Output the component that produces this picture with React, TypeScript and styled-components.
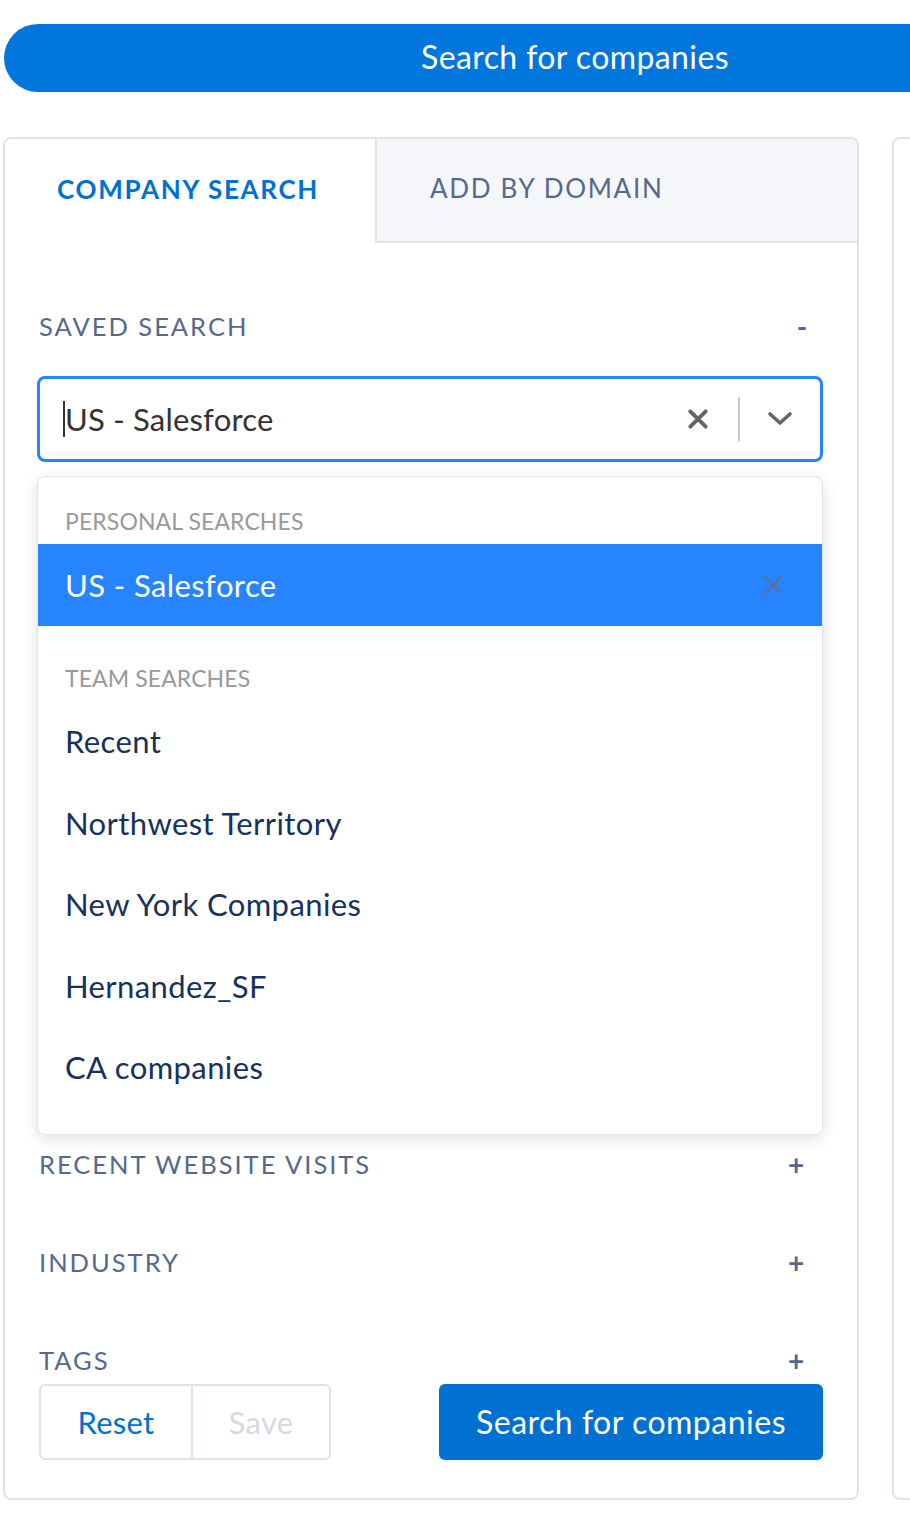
import * as React from 'react';
import styled, { createGlobalStyle } from 'styled-components';

const GlobalStyle = createGlobalStyle`
  html, body {
    margin: 0;
    padding: 0;
    background: #ffffff;
    overflow: hidden;
  }
  body {
    font-family: Lato, "Open Sans", sans-serif;
  }
`;

const Page = styled.div`
  padding-top: 24px;
  width: 910px;
  overflow: hidden;
`;

const TopBar = styled.div`
  margin-left: 4px;
  width: 1142px;
  height: 68px;
  border-radius: 34px 0 0 34px;
  background: #0176dd;
  color: #ffffff;
  font-size: 32px;
  letter-spacing: 0.4px;
  display: flex;
  align-items: center;
  justify-content: center;
  padding-bottom: 3px;
  box-sizing: border-box;
`;

const CardRow = styled.div`
  display: flex;
  gap: 33px;
  margin-top: 45px;
  padding-left: 3px;
`;

const Card = styled.div`
  flex: 0 0 auto;
  width: 856px;
  height: 1363px;
  box-sizing: border-box;
  border: 2px solid #dfe3ea;
  border-radius: 8px;
  background: #ffffff;
  display: flex;
  flex-direction: column;
`;

const GhostCard = styled(Card)`
  width: 400px;
`;

const Tabs = styled.div`
  display: flex;
  height: 104px;
`;

const Tab = styled.div<{ active?: boolean }>`
  box-sizing: border-box;
  display: flex;
  align-items: center;
  font-size: 26px;
  letter-spacing: 1.7px;
  text-transform: uppercase;
  padding-bottom: 5px;
  ${({ active }) =>
    active
      ? `
    width: 370px;
    padding-left: 52px;
    color: #0070d2;
    font-weight: 700;
    background: #ffffff;
    border-top-left-radius: 6px;
  `
      : `
    flex: 1;
    padding-left: 53px;
    color: #54698d;
    background: #f4f6f9;
    border-left: 2px solid #dfe3ea;
    border-bottom: 2px solid #dfe3ea;
    border-top-right-radius: 6px;
  `}
`;

const Body = styled.div`
  padding: 0 34px;
  display: flex;
  flex-direction: column;
  flex: 1;
`;

const Section = styled.div<{ covered?: boolean }>`
  padding-top: 68px;
  visibility: ${({ covered }) => (covered ? 'hidden' : 'visible')};
`;

const SectionHeader = styled.div`
  display: flex;
  justify-content: space-between;
  align-items: center;
  height: 30px;
  font-size: 25.5px;
  letter-spacing: 2px;
  color: #54698d;
  text-transform: uppercase;
`;

const Toggle = styled.span<{ minus?: boolean }>`
  font-size: 28px;
  font-weight: 700;
  width: 22px;
  margin-right: ${({ minus }) => (minus ? '9px' : '15px')};
  text-align: center;
  color: #54698d;
`;

const SavedBlock = styled.div`
  position: relative;
  margin-bottom: 31px;
`;

const SelectBox = styled.div`
  margin-top: 35px;
  margin-left: -2px;
  height: 86px;
  box-sizing: border-box;
  border: 3px solid #2684ff;
  border-radius: 8px;
  display: flex;
  align-items: center;
`;

const SelectValue = styled.div`
  flex: 1;
  padding-left: 23px;
  font-size: 31px;
  letter-spacing: 0.2px;
  color: #333333;
  display: flex;
  align-items: center;
`;

const Caret = styled.span`
  display: inline-block;
  width: 2px;
  height: 36px;
  background: #333333;
`;

const IconBtn = styled.div`
  width: 80px;
  height: 100%;
  display: flex;
  align-items: center;
  justify-content: center;
`;

const Separator = styled.span`
  width: 2px;
  height: 44px;
  background: #cccccc;
`;

const Menu = styled.div`
  position: absolute;
  top: 100px;
  left: -2px;
  right: 0;
  background: #ffffff;
  border: 1px solid #e3e3e3;
  border-radius: 8px;
  box-shadow: 0 4px 16px rgba(0, 0, 0, 0.12);
  padding-bottom: 26px;
  overflow: hidden;
  z-index: 5;
`;

const GroupHeading = styled.div<{ first?: boolean }>`
  padding: ${({ first }) => (first ? '32px' : '40px')} 28px 11px 27px;
  line-height: 24px;
  font-size: 23px;
  color: #999999;
  text-transform: uppercase;
  letter-spacing: 0.1px;
`;

const Option = styled.div<{ selected?: boolean }>`
  height: 81.5px;
  display: flex;
  align-items: center;
  justify-content: space-between;
  padding: 0 38px 0 27px;
  font-size: 31px;
  letter-spacing: 0.4px;
  color: ${({ selected }) => (selected ? '#ffffff' : '#16325c')};
  background: ${({ selected }) => (selected ? '#2684ff' : 'transparent')};
`;

const Footer = styled.div`
  margin-top: 9px;
  display: flex;
  justify-content: space-between;
  align-items: center;
`;

const ButtonGroup = styled.div`
  display: flex;
  height: 76px;
  border: 2px solid #dfe3ea;
  border-radius: 6px;
  box-sizing: border-box;
`;

const GroupButton = styled.button<{ disabled?: boolean; wide?: boolean }>`
  width: ${({ wide }) => (wide ? '150px' : '138px')};
  border: none;
  background: transparent;
  font-family: inherit;
  font-size: 31px;
  letter-spacing: 0.3px;
  color: ${({ disabled }) => (disabled ? '#d3d9e2' : '#0070d2')};
  & + & {
    border-left: 2px solid #dfe3ea;
  }
`;

const PrimaryButton = styled.button`
  width: 384px;
  height: 76px;
  border: none;
  border-radius: 6px;
  background: #0070d2;
  color: #ffffff;
  font-family: inherit;
  font-size: 32px;
  letter-spacing: 0.5px;
  padding-bottom: 3px;
`;

const coveredSections = ['Location', 'Employees', 'Revenue', 'Technologies', 'Keywords', 'Company name'];
const teamSearches = ['Recent', 'Northwest Territory', 'New York Companies', 'Hernandez_SF', 'CA companies'];
const filterSections = ['Recent Website Visits', 'Industry', 'Tags'];

const CloseIcon = ({ size, color, stroke }: { size: number; color: string; stroke: number }) => (
  <svg width={size} height={size} viewBox="0 0 20 20">
    <path d="M3 3 L17 17 M17 3 L3 17" stroke={color} strokeWidth={stroke} strokeLinecap="round" />
  </svg>
);

export default function App() {
  return (
    <>
      <GlobalStyle />
      <Page>
        <TopBar>Search for companies</TopBar>
        <CardRow>
          <Card>
            <Tabs>
              <Tab active>Company Search</Tab>
              <Tab>Add by Domain</Tab>
            </Tabs>
            <Body>
              <Section>
                <SectionHeader>
                  Saved Search
                  <Toggle minus>-</Toggle>
                </SectionHeader>
                <SavedBlock>
                  <SelectBox>
                    <SelectValue>
                      <Caret />
                      US - Salesforce
                    </SelectValue>
                    <IconBtn>
                      <CloseIcon size={22} color="#666666" stroke={3.6} />
                    </IconBtn>
                    <Separator />
                    <IconBtn>
                      <svg width="26" height="16" viewBox="0 0 26 16">
                        <path d="M3 3 L13 12 L23 3" stroke="#666666" strokeWidth="3.6" fill="none" strokeLinecap="round" strokeLinejoin="round" />
                      </svg>
                    </IconBtn>
                  </SelectBox>
                  <Menu>
                    <GroupHeading first>Personal Searches</GroupHeading>
                    <Option selected>
                      US - Salesforce
                      <CloseIcon size={22} color="#5a7298" stroke={2.2} />
                    </Option>
                    <GroupHeading>Team Searches</GroupHeading>
                    {teamSearches.map(name => (
                      <Option key={name}>{name}</Option>
                    ))}
                  </Menu>
                </SavedBlock>
              </Section>
              {coveredSections.map(name => (
                <Section key={name} covered>
                  <SectionHeader>
                    {name}
                    <Toggle>+</Toggle>
                  </SectionHeader>
                </Section>
              ))}
              {filterSections.map(name => (
                <Section key={name}>
                  <SectionHeader>
                    {name}
                    <Toggle>+</Toggle>
                  </SectionHeader>
                </Section>
              ))}
              <Footer>
                <ButtonGroup>
                  <GroupButton wide>Reset</GroupButton>
                  <GroupButton disabled>Save</GroupButton>
                </ButtonGroup>
                <PrimaryButton>Search for companies</PrimaryButton>
              </Footer>
            </Body>
          </Card>
          <GhostCard />
        </CardRow>
      </Page>
    </>
  );
}
